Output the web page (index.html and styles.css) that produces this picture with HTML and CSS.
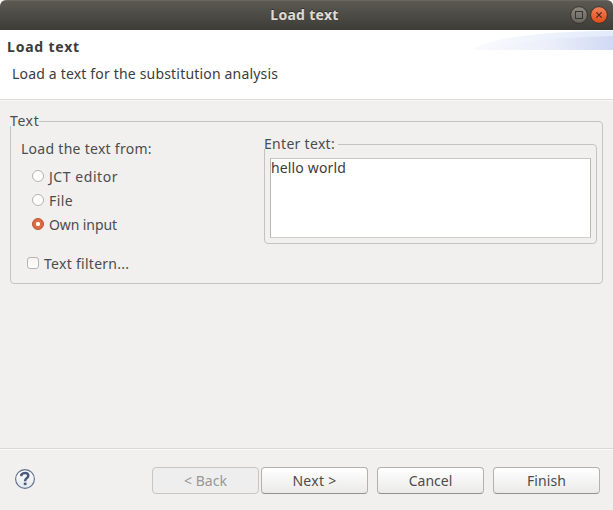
FILE: index.html
```html
<!DOCTYPE html>
<html lang="en">
<head>
<meta charset="utf-8">
<title>Load text</title>
<link rel="stylesheet" href="styles.css">
</head>
<body>
<div class="window">
  <div class="titlebar">
    <div class="title">Load text</div>
    <svg class="controls" width="40" height="20" viewBox="0 0 40 20">
      <defs>
        <linearGradient id="gray" x1="0" y1="0" x2="0" y2="1"><stop offset="0" stop-color="#8b8981"/><stop offset="1" stop-color="#65635c"/></linearGradient>
        <linearGradient id="orange" x1="0" y1="0" x2="0" y2="1"><stop offset="0" stop-color="#f4845b"/><stop offset="1" stop-color="#df4a16"/></linearGradient>
      </defs>
      <circle cx="10" cy="10" r="8.4" fill="url(#gray)" stroke="#35342f"/>
      <rect x="6.5" y="6.5" width="7" height="7" fill="none" stroke="#35342f"/>
      <circle cx="30" cy="10" r="8.4" fill="url(#orange)" stroke="#35342f"/>
      <path d="M27.4 7.4l5.2 5.2M32.6 7.4l-5.2 5.2" stroke="#45291c" stroke-width="1.2"/>
    </svg>
  </div>
  <header class="header">
    <div class="captions">
      <h1 class="heading">Load text</h1>
      <p class="description">Load a text for the substitution analysis</p>
    </div>
    <svg class="banner" width="141" height="20" viewBox="0 0 141 20">
      <defs>
        <linearGradient id="swoosh"><stop offset="0" stop-color="#fafbfe"/><stop offset="1" stop-color="#e2eafa"/></linearGradient>
        <linearGradient id="swoosh2"><stop offset="0" stop-color="#f8f9fd"/><stop offset="0.5" stop-color="#eceffa"/><stop offset="1" stop-color="#d0daf4"/></linearGradient>
      </defs>
      <path d="M0 20C18 8 62 2 141 0.5V20Z" fill="url(#swoosh)"/>
      <path d="M12 20C42 12 88 7 141 6V20Z" fill="url(#swoosh2)"/>
    </svg>
  </header>
  <main class="content">
    <fieldset class="group source">
      <legend class="legend-text">Text</legend>
      <div class="options">
        <div class="label from">Load the text from:</div>
        <div class="radio"><span class="dot"></span><span class="t-jct">JCT editor</span></div>
        <div class="radio"><span class="dot"></span><span class="t-file">File</span></div>
        <div class="radio"><span class="dot checked"></span><span class="t-own">Own input</span></div>
        <div class="check"><span class="box"></span><span class="t-filter">Text filtern...</span></div>
      </div>
      <fieldset class="group entry">
        <legend class="legend-enter">Enter text:</legend>
        <div class="textarea">hello world</div>
      </fieldset>
    </fieldset>
  </main>
  <footer class="footer">
    <svg class="help" width="22" height="22" viewBox="0 0 22 22">
      <defs><linearGradient id="helpfill" x1="0" y1="0" x2="0" y2="1"><stop offset="0" stop-color="#fff"/><stop offset="1" stop-color="#e4e7ec"/></linearGradient></defs>
      <circle cx="11" cy="11" r="9.4" fill="url(#helpfill)" stroke="#5d6f8c" stroke-width="1.1"/>
      <path d="M7.4 8.2V6.6Q8.8 5.1 11 5.1Q14.3 5.1 14.3 7.8Q14.3 9.2 12.6 10.3Q11.1 11.3 11.1 13.2" fill="none" stroke="#475a7d" stroke-width="2.5"/>
      <rect x="9.8" y="14.6" width="2.7" height="2.5" fill="#475a7d"/>
    </svg>
    <div class="buttons">
      <div class="button disabled">&lt; Back</div>
      <div class="button next">Next &gt;</div>
      <div class="button cancel">Cancel</div>
      <div class="button finish">Finish</div>
    </div>
  </footer>
</div>
</body>
</html>
```
FILE: styles.css
```css
* { box-sizing: border-box; }
body {
  margin: 0;
  background: #fff;
  font: 14px/20px "Noto Sans", sans-serif;
  color: #4c4c4c;
}
.window {
  width: 613px;
  height: 510px;
  display: flex;
  flex-direction: column;
  background: #f1f0ee;
  border-radius: 6px 6px 0 0;
  overflow: hidden;
  white-space: nowrap;
}
.titlebar {
  height: 30px;
  flex: none;
  display: grid;
  grid-template-columns: 40px 1fr 44px;
  align-items: center;
  background: linear-gradient(#5b5952, #3d3c37);
  border-top: 1px solid #69675f;
}
.title {
  grid-column: 2;
  margin-top: -2px;
  text-align: center;
  font-weight: bold;
  color: #dfdbd2;
  text-shadow: 0 -1px #2e2d29;
  letter-spacing: 0.3px;
}
.controls { display: block; margin-top: -1px; }
.header {
  height: 71px;
  flex: none;
  display: flex;
  justify-content: space-between;
  align-items: flex-start;
  background: #fff;
  border-bottom: 1px solid #f8f8f7;
  box-shadow: inset 0 -1px #dcdcdb;
}
.captions { padding: 7px 0 0 7px; }
.heading {
  margin: 0;
  font-size: 14px;
  line-height: 20px;
  letter-spacing: 0.8px;
  color: #3c3c3c;
}
.description { margin: 7px 0 0 5px; letter-spacing: 0.18px; color: #3c3c3c; }
.content { flex: 1; padding: 15px 10px 0; }
.group { margin: 0; padding: 0; border: 1px solid #c4c3c1; border-radius: 4px; min-width: 0; }
.group > legend {
  margin-left: -1px;
  padding: 0;
  background: #f1f0ee;
  height: 10px;
  line-height: 10px;
}
.legend-text { letter-spacing: 0.6px; }
.group > .legend-enter { letter-spacing: 0.3px; padding-right: 3px; }
.source { height: 168px; display: flex; }
.options { width: 253px; padding-left: 10px; }
.from { margin: 13px 0 6px; letter-spacing: 0.28px; }
.radio { display: flex; align-items: center; gap: 5px; height: 24px; padding-left: 11px; }
.t-jct { letter-spacing: 0.55px; }
.t-file { letter-spacing: 0.4px; }
.t-own { letter-spacing: -0.1px; }
.t-filter { letter-spacing: 0.28px; }
.dot {
  width: 12px;
  height: 12px;
  margin-top: -2px;
  border: 1px solid #b3b2b0;
  border-radius: 50%;
  background: #fff;
}
.dot.checked {
  border-color: #b9502d;
  background: radial-gradient(circle, #fff 0 1.8px, #dc6a42 2.5px);
}
.check { display: flex; align-items: center; gap: 5px; margin-top: 17px; padding-left: 6px; }
.box {
  width: 12px;
  height: 12px;
  margin-top: -2px;
  border: 1px solid #b7b6b4;
  border-radius: 3px;
  background: linear-gradient(#f3f3f3, #fff);
}
.entry { width: 333px; height: 105px; margin-top: 13px; }
.textarea {
  width: 321px;
  height: 80px;
  margin: 9px 0 0 5px;
  border: 1px solid #b9b7b3;
  border-top-color: #c8c7c5;
  border-bottom-color: #cecdcb;
  background: #fff;
  color: #3c3c3c;
  line-height: 18px;
  letter-spacing: 0.15px;
}
.footer {
  height: 62px;
  flex: none;
  display: flex;
  justify-content: space-between;
  align-items: flex-start;
  border-top: 1px solid #dad9d7;
  box-shadow: inset 0 1px #fbfbfa;
  padding: 18px 13px 0 14px;
}
.help { margin-top: 1px; }
.buttons { display: flex; gap: 9px; }
.button {
  width: 107px;
  height: 27px;
  border: 1px solid #b2b1af;
  border-bottom-color: #92918f;
  border-radius: 4px;
  background: linear-gradient(#fff, #ebeae9);
  text-align: center;
  line-height: 26px;
}
.next { letter-spacing: 0.3px; }
.finish { letter-spacing: 0.1px; }
.button.disabled {
  margin-right: -7px;
  border-color: #c7c6c4;
  background: #eee;
  color: #999895;
}
```
